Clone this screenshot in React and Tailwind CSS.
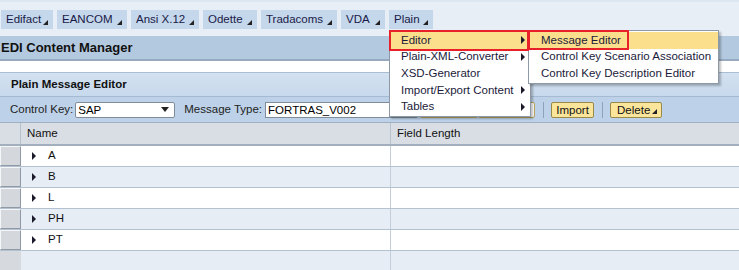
import React from 'react';

const tabs = [
  { label: 'Edifact', w: 'w-[52px]' },
  { label: 'EANCOM', w: 'w-[70px]' },
  { label: 'Ansi X.12', w: 'w-[68px]' },
  { label: 'Odette', w: 'w-[54px]' },
  { label: 'Tradacoms', w: 'w-[76px]' },
  { label: 'VDA', w: 'w-[44px]' },
  { label: 'Plain', w: 'w-[44px]' },
];

const menuItems = [
  { label: 'Editor', sub: true, active: true },
  { label: 'Plain-XML-Converter', sub: true },
  { label: 'XSD-Generator', sub: false },
  { label: 'Import/Export Content', sub: true },
  { label: 'Tables', sub: true },
];

const subItems = [
  { label: 'Message Editor', active: true },
  { label: 'Control Key Scenario Association' },
  { label: 'Control Key Description Editor' },
];

const rows = ['A', 'B', 'L', 'PH', 'PT'];

const Corner = () => (
  <svg width="5" height="5" viewBox="0 0 5 5" className="absolute right-[5px] bottom-[4px]">
    <polygon points="0,5 5,0 5,5" fill="#222" />
  </svg>
);

const RightArrow = ({ className }) => (
  <svg width="4" height="8" viewBox="0 0 4 8" className={className}>
    <polygon points="0,0 4,4 0,8" fill="#1a1a2a" />
  </svg>
);

const App = () => {
  return (
    <div className="relative w-[739px] h-[270px] overflow-hidden bg-white text-[11.5px] text-[#1c1c3c]" style={{ fontFamily: '"Liberation Sans", Arial, sans-serif' }}>
      {/* Top tab bar */}
      <div className="h-[36px] bg-[#e7eef6] border-t-2 border-[#dce7f2] pt-[8px] pl-[1px] flex gap-[4px]">
        {tabs.map((t) => (
          <div key={t.label} className={`relative h-[19px] ${t.w} bg-[#c4d7eb] pl-[5px] leading-[18px] text-[#1a1a48] whitespace-nowrap`}>
            {t.label}
            <Corner />
          </div>
        ))}
      </div>

      {/* Title bar */}
      <div className="h-[25px] bg-[#b3c9df] border-b-2 border-[#98aac0] pl-[1px] leading-[24px] text-[13px] font-bold text-[#111]">
        EDI Content Manager
      </div>

      <div className="h-[11px] bg-white" />

      {/* Panel header */}
      <div className="h-[24px] bg-gradient-to-b from-[#d3e1f0] to-[#c7d9ec] border-t border-[#a9bdd3] pl-[11px] leading-[22px] font-bold text-[#111]">
        Plain Message Editor
      </div>

      {/* Toolbar */}
      <div className="h-[26px] bg-[#bdd2e9] border-t border-[#a6bbd2] flex items-center pl-[10px] text-[#222] whitespace-nowrap">
        <span>Control Key:</span>
        <div className="ml-[2px] w-[100px] h-[16px] bg-white border border-[#7f8c99] rounded-[2px] flex items-center justify-between pl-[2px] pr-[5px] text-[#000]">
          <span className="leading-[14px]">SAP</span>
          <svg width="8" height="5" viewBox="0 0 8 5">
            <polygon points="0,0 8,0 4,5" fill="#222" />
          </svg>
        </div>
        <span className="ml-[9px]">Message Type:</span>
        <div className="ml-[3px] w-[152px] h-[16px] bg-white border border-[#7f8c99] pl-[2px] leading-[14px] text-[#000]">
          FORTRAS_V002
        </div>
        <div className="ml-[3px] w-[58px] h-[16px] bg-white border border-[#b9a660] rounded-[2px]" />
        <div className="w-[57px] h-[16px] bg-white border border-[#b9a660] rounded-[2px]" />
        <div className="ml-[8px] w-px h-[16px] bg-[#8ea3ba]" />
        <div className="ml-[7px] w-[43px] h-[16px] bg-[#fbe59a] border border-[#9a8a4a] rounded-[2px] text-center leading-[14px] text-[#111]">
          Import
        </div>
        <div className="ml-[8px] w-px h-[16px] bg-[#8ea3ba]" />
        <div className="relative ml-[7px] w-[52px] h-[16px] bg-[#fbe59a] border border-[#9a8a4a] rounded-[2px] pl-[6px] leading-[14px] text-[#111]">
          Delete
          <svg width="5" height="5" viewBox="0 0 5 5" className="absolute right-[4px] bottom-[3px]">
            <polygon points="0,5 5,0 5,5" fill="#222" />
          </svg>
        </div>
      </div>

      {/* Table */}
      <div className="border-t border-[#a0b0c2]">
        <div className="h-[23px] bg-[#d9dee4] border-b-2 border-[#a3afbd] flex">
          <div className="w-[21px] border-r border-[#b6c2cf]" />
          <div className="w-[370px] border-r border-[#b6c2cf] pl-[6px] leading-[21px] text-[#111]">Name</div>
          <div className="flex-1 pl-[6px] leading-[21px] text-[#111]">Field Length</div>
        </div>
        {rows.map((r, i) => (
          <div key={r} className={`h-[21px] flex border-b border-[#b3c1d0] ${i % 2 ? 'bg-[#e7edf5]' : 'bg-white'}`}>
            <div className="w-[21px] bg-[#d4d8dd] border border-[#f4f6f8] border-r-[#8f9aa6] border-b-[#8f9aa6]" />
            <div className="w-[370px] border-r border-[#c3ced9] flex items-center pl-[11px]">
              <RightArrow />
              <span className="ml-[12px] text-[#111]">{r}</span>
            </div>
            <div className="flex-1" />
          </div>
        ))}
        <div className="h-[30px] flex bg-[#e7edf5]">
          <div className="w-[21px] bg-[#d6dade]" />
          <div className="w-[370px] border-r border-[#c3ced9]" />
        </div>
      </div>

      {/* Dropdown menu */}
      <div className="absolute left-[389px] top-[30px] w-[142px] bg-white border border-[#8d99a6] shadow-[2px_2px_2px_rgba(0,0,0,0.25)] pt-[1px] pb-[1px] whitespace-nowrap">
        {menuItems.map((m) => (
          <div key={m.label} className={`relative h-[16.7px] flex items-center pl-[11px] text-[#1a1a3a] ${m.active ? 'bg-[#fcdf8c]' : ''}`}>
            {m.label}
            {m.sub && <RightArrow className="absolute right-[5px]" />}
          </div>
        ))}
      </div>

      {/* Submenu */}
      <div className="absolute left-[528px] top-[30px] w-[191px] bg-white border border-[#8d99a6] shadow-[2px_2px_2px_rgba(0,0,0,0.25)] pt-[1px] pb-[1px] whitespace-nowrap">
        {subItems.map((s) => (
          <div key={s.label} className={`h-[16.7px] flex items-center pl-[12px] text-[#1a1a3a] ${s.active ? 'bg-[#fcdf8c]' : ''}`}>
            {s.label}
          </div>
        ))}
      </div>

      {/* Highlight outlines */}
      <div className="absolute left-[389px] top-[30px] w-[140px] h-[21px] border-2 border-[#e8202a]" />
      <div className="absolute left-[528px] top-[30px] w-[101px] h-[20px] border-2 border-[#e8202a]" />
    </div>
  );
};

export default App;
